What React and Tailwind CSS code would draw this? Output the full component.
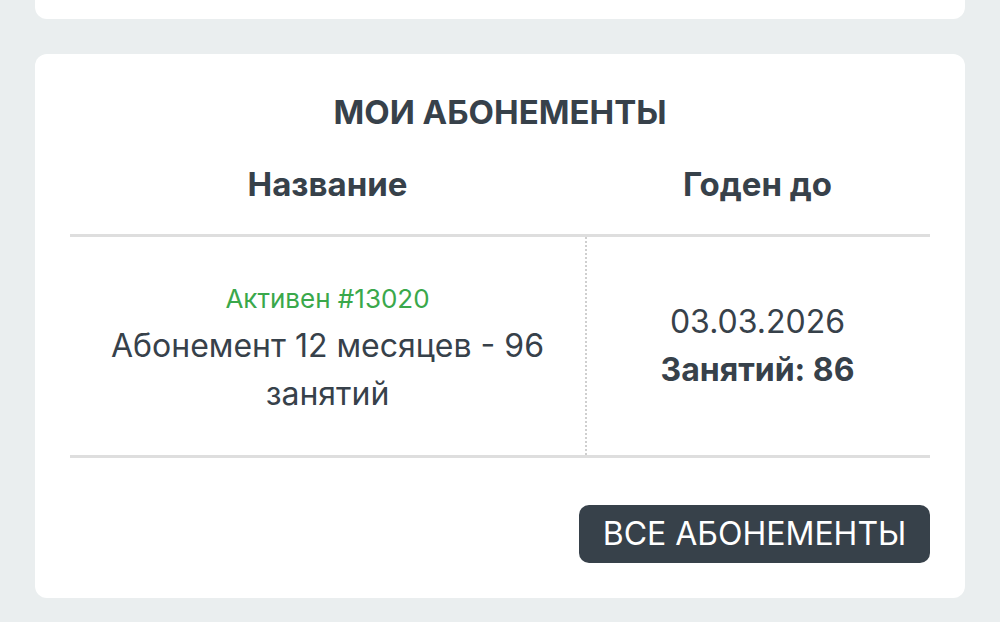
import React from 'react';

function App() {
  return (
    <div
      className="w-[1000px] h-[622px] overflow-hidden bg-[#eaeeef] px-[35px] flex flex-col gap-[35px] text-[#37414a]"
      style={{ fontFamily: 'Inter, "Noto Sans", sans-serif' }}
    >
      <div className="h-[54px] -mt-[35px] bg-white rounded-[12px] shrink-0" />

      <div className="bg-white rounded-[12px] px-[35px] pt-[38px] pb-[35px] shrink-0">
        <h2 className="text-center text-[33px] font-bold leading-[40px]">МОИ АБОНЕМЕНТЫ</h2>

        <div className="grid grid-cols-[515px_345px] border-b-[3px] border-[#dedede]">
          <div className="h-[102px] pt-[4px] flex items-center justify-center text-[33px] font-bold">Название</div>
          <div className="h-[102px] pt-[4px] flex items-center justify-center text-[33px] font-bold">Годен до</div>

          <div className="border-t-[3px] border-[#dedede] h-[221px] flex flex-col items-center justify-center text-center pt-[8px]">
            <div className="text-[26px] text-[#3aa84b] leading-[32px]">Активен #13020</div>
            <div className="text-[32px] leading-[48px] mt-[7px] px-[36px]">Абонемент 12 месяцев - 96 занятий</div>
          </div>
          <div className="border-t-[3px] border-[#dedede] h-[221px] relative flex flex-col items-center justify-center text-center">
            <div className="absolute left-0 top-0 bottom-0 border-l-[2px] border-dotted border-[#cfcfcf]" />
            <div className="text-[32px] leading-[48px]">03.03.2026</div>
            <div className="text-[32px] leading-[48px] font-bold">Занятий: 86</div>
          </div>
        </div>

        <div className="flex justify-end mt-[47px]">
          <button className="h-[58px] w-[351px] rounded-[10px] bg-[#37414a] text-white text-[32px] leading-none">
            ВСЕ АБОНЕМЕНТЫ
          </button>
        </div>
      </div>
    </div>
  );
}

export default App;
